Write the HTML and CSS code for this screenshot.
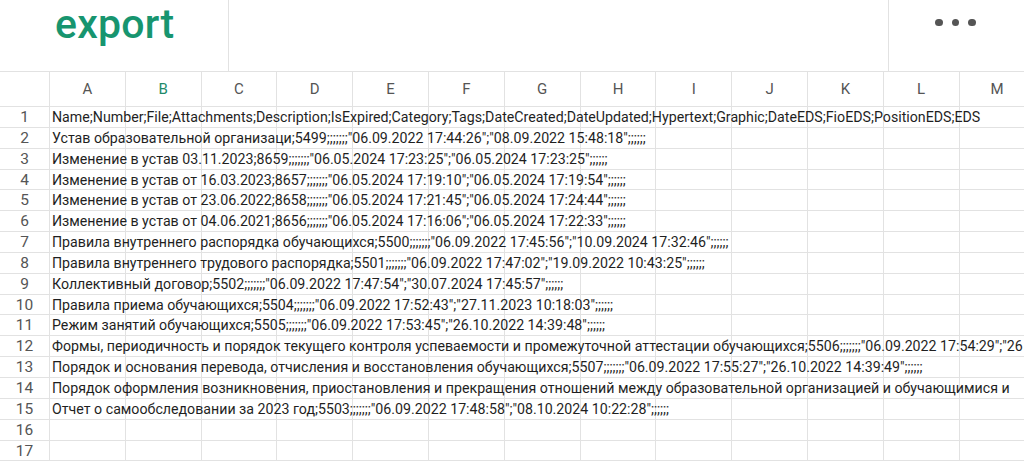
FILE: index.html
```html
<!DOCTYPE html>
<html lang="ru">
<head>
<meta charset="utf-8">
<title>export</title>
<link rel="stylesheet" href="styles.css">
</head>
<body>
<header class="topbar">
  <div class="title-box"><h1 class="title">export</h1></div>
  <div class="spacer"></div>
  <div class="menu-box">
    <span class="dot"></span><span class="dot"></span><span class="dot"></span>
  </div>
</header>
<main class="sheet">
  <div class="colhead">
    <div class="corner"></div>
    <div class="col">A</div><div class="col active">B</div><div class="col">C</div><div class="col">D</div><div class="col">E</div><div class="col">F</div><div class="col">G</div><div class="col">H</div><div class="col">I</div><div class="col">J</div><div class="col">K</div><div class="col">L</div><div class="col">M</div>
  </div>
  <div class="row"><div class="num">1</div><div class="data">Name;Number;File;Attachments;Description;IsExpired;Category;Tags;DateCreated;DateUpdated;Hypertext;Graphic;DateEDS;FioEDS;PositionEDS;EDS</div></div>
  <div class="row"><div class="num">2</div><div class="data">Устав образовательной организаци;5499;;;;;;;"06.09.2022 17:44:26";"08.09.2022 15:48:18";;;;;;</div></div>
  <div class="row"><div class="num">3</div><div class="data">Изменение в устав 03.11.2023;8659;;;;;;;"06.05.2024 17:23:25";"06.05.2024 17:23:25";;;;;;</div></div>
  <div class="row"><div class="num">4</div><div class="data">Изменение в устав от 16.03.2023;8657;;;;;;;"06.05.2024 17:19:10";"06.05.2024 17:19:54";;;;;;</div></div>
  <div class="row"><div class="num">5</div><div class="data">Изменение в устав от 23.06.2022;8658;;;;;;;"06.05.2024 17:21:45";"06.05.2024 17:24:44";;;;;;</div></div>
  <div class="row"><div class="num">6</div><div class="data">Изменение в устав от 04.06.2021;8656;;;;;;;"06.05.2024 17:16:06";"06.05.2024 17:22:33";;;;;;</div></div>
  <div class="row"><div class="num">7</div><div class="data">Правила внутреннего распорядка обучающихся;5500;;;;;;;"06.09.2022 17:45:56";"10.09.2024 17:32:46";;;;;;</div></div>
  <div class="row"><div class="num">8</div><div class="data">Правила внутреннего трудового распорядка;5501;;;;;;;"06.09.2022 17:47:02";"19.09.2022 10:43:25";;;;;;</div></div>
  <div class="row"><div class="num">9</div><div class="data">Коллективный договор;5502;;;;;;;"06.09.2022 17:47:54";"30.07.2024 17:45:57";;;;;;</div></div>
  <div class="row"><div class="num">10</div><div class="data">Правила приема обучающихся;5504;;;;;;;"06.09.2022 17:52:43";"27.11.2023 10:18:03";;;;;;</div></div>
  <div class="row"><div class="num">11</div><div class="data">Режим занятий обучающихся;5505;;;;;;;"06.09.2022 17:53:45";"26.10.2022 14:39:48";;;;;;</div></div>
  <div class="row"><div class="num">12</div><div class="data">Формы, периодичность и порядок текущего контроля успеваемости и промежуточной аттестации обучающихся;5506;;;;;;;"06.09.2022 17:54:29";"26</div></div>
  <div class="row"><div class="num">13</div><div class="data">Порядок и основания перевода, отчисления и восстановления обучающихся;5507;;;;;;;"06.09.2022 17:55:27";"26.10.2022 14:39:49";;;;;;</div></div>
  <div class="row"><div class="num">14</div><div class="data">Порядок оформления возникновения, приостановления и прекращения отношений между образовательной организацией и обучающимися и</div></div>
  <div class="row"><div class="num">15</div><div class="data">Отчет о самообследовании за 2023 год;5503;;;;;;;"06.09.2022 17:48:58";"08.10.2024 10:22:28";;;;;;</div></div>
  <div class="row"><div class="num">16</div><div class="data"></div></div>
  <div class="row"><div class="num">17</div><div class="data"></div></div>
</main>
</body>
</html>
```
FILE: styles.css
```css
html, body {
  margin: 0;
  padding: 0;
  background: #ffffff;
  overflow: hidden;
}
body {
  width: 1024px;
  height: 465px;
  font-family: Roboto, "Noto Sans", "Liberation Sans", sans-serif;
  color: #1f1f1f;
}
.topbar {
  display: flex;
  height: 71px;
  border-bottom: 1px solid #e2e2e2;
}
.title-box {
  box-sizing: border-box;
  width: 229px;
  border-right: 1px solid #e2e2e2;
  padding-left: 55px;
}
.title {
  margin: 0;
  font-size: 41px;
  font-weight: 500;
  line-height: 48px;
  color: #17956f;
  letter-spacing: 0.2px;
}
.spacer {
  width: 660px;
  box-sizing: border-box;
  border-right: 1px solid #e2e2e2;
}
.menu-box {
  flex: 1;
  display: flex;
  gap: 9px;
  padding: 18.5px 0 0 46px;
}
.dot {
  width: 7.5px;
  height: 7.5px;
  border-radius: 50%;
  background: #555555;
}
.sheet {
  display: flex;
  flex-direction: column;
}
.colhead {
  display: flex;
  height: 34px;
  border-bottom: 1px solid #e2e2e2;
  flex-shrink: 0;
}
.corner {
  width: 50px;
  flex-shrink: 0;
  box-sizing: border-box;
  border-right: 1px solid #e2e2e2;
}
.col {
  width: 75.8px;
  flex-shrink: 0;
  box-sizing: border-box;
  border-right: 1px solid #e2e2e2;
  font-size: 15px;
  line-height: 34px;
  text-align: center;
  color: #555555;
}
.col.active {
  color: #1e8a6a;
}
.row {
  display: flex;
  height: 20.85px;
  flex-shrink: 0;
  box-sizing: border-box;
  border-bottom: 1px solid #e2e2e2;
}
.num {
  width: 50px;
  flex-shrink: 0;
  box-sizing: border-box;
  border-right: 1px solid #e2e2e2;
  text-align: center;
  font-size: 15.5px;
  line-height: 20px;
  color: #555555;
}
.data {
  flex: 1;
  min-width: 0;
  overflow: hidden;
  white-space: nowrap;
  padding-left: 2px;
  font-size: 14.2px;
  line-height: 20px;
  color: #1f1f1f;
  background-image: repeating-linear-gradient(to right, transparent 0, transparent 74.8px, #e2e2e2 74.8px, #e2e2e2 75.8px);
}
```
